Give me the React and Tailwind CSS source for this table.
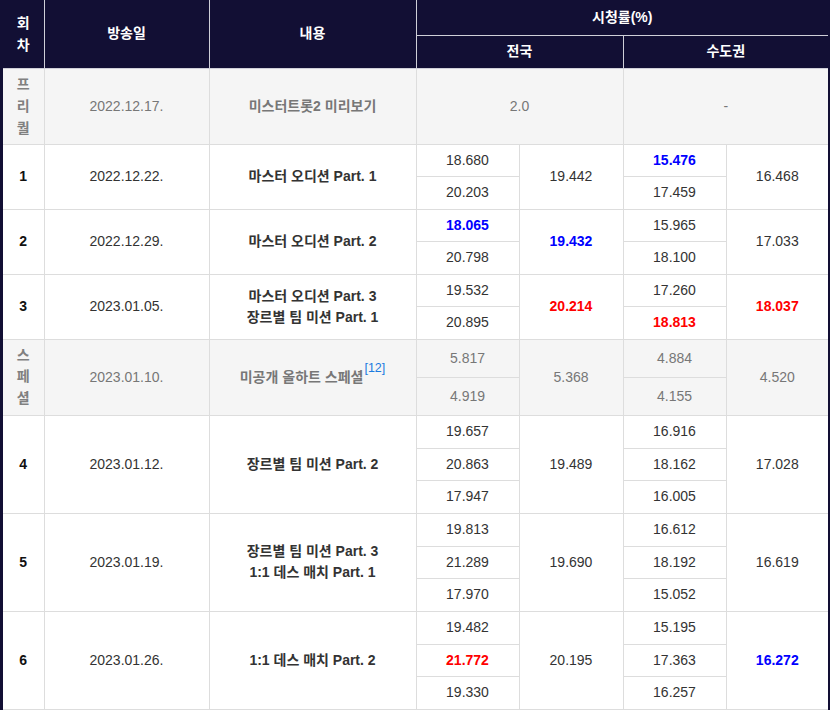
import React from "react";

const B = "font-bold text-[#0000ff]";
const R = "font-bold text-[#ff0000]";

const rows = [
  {
    no: "1",
    date: "2022.12.22.",
    content: ["마스터 오디션 Part. 1"],
    nat: [["18.680"], ["20.203"]],
    natAvg: ["19.442"],
    cap: [["15.476", B], ["17.459"]],
    capAvg: ["16.468"],
    h: [32, 33],
  },
  {
    no: "2",
    date: "2022.12.29.",
    content: ["마스터 오디션 Part. 2"],
    nat: [["18.065", B], ["20.798"]],
    natAvg: ["19.432", B],
    cap: [["15.965"], ["18.100"]],
    capAvg: ["17.033"],
    h: [32, 33],
  },
  {
    no: "3",
    date: "2023.01.05.",
    content: ["마스터 오디션 Part. 3", "장르별 팀 미션 Part. 1"],
    nat: [["19.532"], ["20.895"]],
    natAvg: ["20.214", R],
    cap: [["17.260"], ["18.813", R]],
    capAvg: ["18.037", R],
    h: [32, 33],
  },
  {
    special: true,
    no: ["스", "페", "셜"],
    date: "2023.01.10.",
    content: ["미공개 올하트 스페셜"],
    nat: [["5.817"], ["4.919"]],
    natAvg: ["5.368"],
    cap: [["4.884"], ["4.155"]],
    capAvg: ["4.520"],
    h: [38, 38],
  },
  {
    no: "4",
    date: "2023.01.12.",
    content: ["장르별 팀 미션 Part. 2"],
    nat: [["19.657"], ["20.863"], ["17.947"]],
    natAvg: ["19.489"],
    cap: [["16.916"], ["18.162"], ["16.005"]],
    capAvg: ["17.028"],
    h: [33, 32, 33],
  },
  {
    no: "5",
    date: "2023.01.19.",
    content: ["장르별 팀 미션 Part. 3", "1:1 데스 매치 Part. 1"],
    nat: [["19.813"], ["21.289"], ["17.970"]],
    natAvg: ["19.690"],
    cap: [["16.612"], ["18.192"], ["15.052"]],
    capAvg: ["16.619"],
    h: [33, 32, 33],
  },
  {
    no: "6",
    date: "2023.01.26.",
    content: ["1:1 데스 매치 Part. 2"],
    nat: [["19.482"], ["21.772", R], ["19.330"]],
    natAvg: ["20.195"],
    cap: [["15.195"], ["17.363"], ["16.257"]],
    capAvg: ["16.272", B],
    h: [33, 32, 33],
  },
];

const td = "border border-[#dddddd] text-center align-middle p-0";
const th = "border border-[#cfcfd8] text-center align-middle p-0 font-bold text-white";

function Cell({ v, rowSpan, extra = "" }) {
  return (
    <td rowSpan={rowSpan} className={`${td} ${extra}`}>
      <span className={v[1] || ""}>{v[0]}</span>
    </td>
  );
}

export default function App() {
  return (
    <div
      className="w-[830px] bg-white text-[14px] leading-[21px] text-[#333333]"
      style={{ fontFamily: '"Liberation Sans", Arial, "Noto Sans CJK KR", sans-serif' }}
    >
      <div className="border-l-[3px] border-r-[2px] border-[#120f34]">
        <table className="w-[825px] table-fixed border-collapse">
          <colgroup>
            <col className="w-[41px]" />
            <col className="w-[165px]" />
            <col className="w-[207px]" />
            <col className="w-[103px]" />
            <col className="w-[104px]" />
            <col className="w-[103px]" />
            <col className="w-[102px]" />
          </colgroup>
          <thead className="bg-[#120f34]">
            <tr className="h-[35px]">
              <th rowSpan={2} className={`${th} border-l-0 border-t-0 border-[#120f34] border-r-[#cfcfd8] leading-[22px]`}>
                회<br />차
              </th>
              <th rowSpan={2} className={`${th} border-t-0`}>방송일</th>
              <th rowSpan={2} className={`${th} border-t-0`}>내용</th>
              <th colSpan={4} className={`${th} border-t-0 border-r-0`}>시청률(%)</th>
            </tr>
            <tr className="h-[33px]">
              <th colSpan={2} className={th}>전국</th>
              <th colSpan={2} className={`${th} border-r-0`}>수도권</th>
            </tr>
          </thead>
          <tbody>
            <tr className="h-[76px] bg-[#f5f5f5] text-[#777777]">
              <td className={`${td} border-l-0 font-bold leading-[22px] text-[#808080]`}>
                프<br />리<br />퀄
              </td>
              <td className={td}>2022.12.17.</td>
              <td className={`${td} font-bold`}>미스터트롯2 미리보기</td>
              <td colSpan={2} className={td}>2.0</td>
              <td colSpan={2} className={`${td} border-r-0`}>-</td>
            </tr>
            {rows.map((r, i) => {
              const n = r.nat.length;
              const base = r.special ? "bg-[#f5f5f5] text-[#777777]" : "";
              return r.nat.map((_, j) => (
                <tr key={`${i}-${j}`} className={base} style={{ height: r.h[j] }}>
                  {j === 0 && (
                    <>
                      <td
                        rowSpan={n}
                        className={`${td} border-l-0 font-bold ${r.special ? "leading-[21.5px] text-[#808080]" : "text-[#111111]"}`}
                      >
                        {r.special ? (
                          <>
                            {r.no[0]}
                            <br />
                            {r.no[1]}
                            <br />
                            {r.no[2]}
                          </>
                        ) : (
                          r.no
                        )}
                      </td>
                      <td rowSpan={n} className={td}>
                        {r.date}
                      </td>
                      <td rowSpan={n} className={`${td} font-bold`}>
                        {r.content.map((c, k) => (
                          <div key={k}>
                            {c}
                            {r.special && (
                              <sup className="ml-[1px] text-[12.5px] font-normal text-[#1a7be0] align-[3px] leading-none">
                                [12]
                              </sup>
                            )}
                          </div>
                        ))}
                      </td>
                    </>
                  )}
                  <Cell v={r.nat[j]} />
                  {j === 0 && <Cell v={r.natAvg} rowSpan={n} />}
                  <Cell v={r.cap[j]} />
                  {j === 0 && <Cell v={r.capAvg} rowSpan={n} extra="border-r-0" />}
                </tr>
              ));
            })}
          </tbody>
        </table>
      </div>
    </div>
  );
}
